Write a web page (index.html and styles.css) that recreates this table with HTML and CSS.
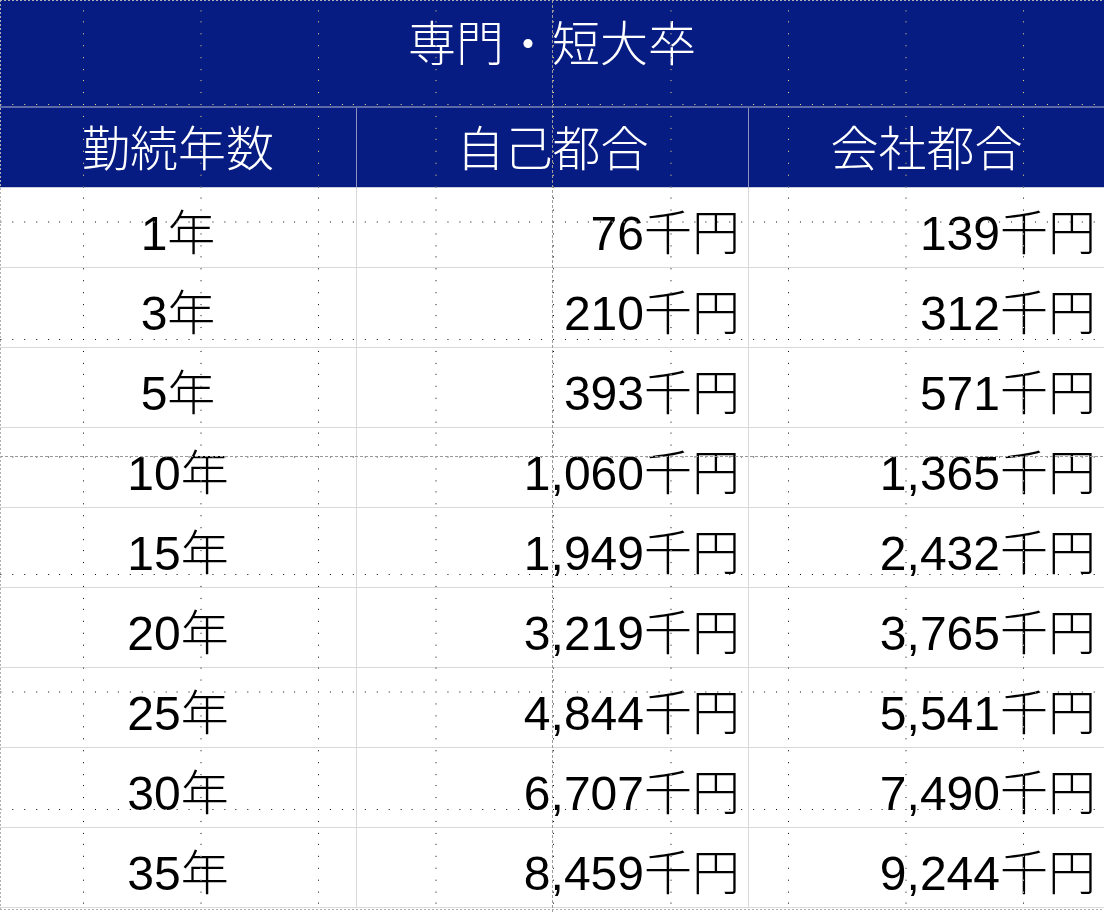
FILE: index.html
```html
<!DOCTYPE html>
<html lang="ja">
<head>
<meta charset="utf-8">
<title>専門・短大卒</title>
<link rel="stylesheet" href="styles.css">
</head>
<body>
<div class="slide">
  <div class="table">
    <div class="title">専門・短大卒</div>
    <div class="hcell">勤続年数</div>
    <div class="hcell">自己都合</div>
    <div class="hcell last">会社都合</div>

    <div class="cell c">1<span class="u">年</span></div><div class="cell r">76<span class="u">千円</span></div><div class="cell r last">139<span class="u">千円</span></div>
    <div class="cell c">3<span class="u">年</span></div><div class="cell r">210<span class="u">千円</span></div><div class="cell r last">312<span class="u">千円</span></div>
    <div class="cell c">5<span class="u">年</span></div><div class="cell r">393<span class="u">千円</span></div><div class="cell r last">571<span class="u">千円</span></div>
    <div class="cell c">10<span class="u">年</span></div><div class="cell r">1,060<span class="u">千円</span></div><div class="cell r last">1,365<span class="u">千円</span></div>
    <div class="cell c">15<span class="u">年</span></div><div class="cell r">1,949<span class="u">千円</span></div><div class="cell r last">2,432<span class="u">千円</span></div>
    <div class="cell c">20<span class="u">年</span></div><div class="cell r">3,219<span class="u">千円</span></div><div class="cell r last">3,765<span class="u">千円</span></div>
    <div class="cell c">25<span class="u">年</span></div><div class="cell r">4,844<span class="u">千円</span></div><div class="cell r last">5,541<span class="u">千円</span></div>
    <div class="cell c">30<span class="u">年</span></div><div class="cell r">6,707<span class="u">千円</span></div><div class="cell r last">7,490<span class="u">千円</span></div>
    <div class="cell c">35<span class="u">年</span></div><div class="cell r">8,459<span class="u">千円</span></div><div class="cell r last">9,244<span class="u">千円</span></div>
  </div>

  <svg class="grid" width="1104" height="912" viewBox="0 0 1104 912" aria-hidden="true">
    <defs>
      <pattern id="dots" x="83" y="104" width="117.5" height="117.5" patternUnits="userSpaceOnUse">
        <path d="M0.5 0V117.5" stroke="#fff" stroke-width="1" stroke-dasharray="1 10.75" shape-rendering="crispEdges"/>
        <path d="M0 0.5H117.5" stroke="#fff" stroke-width="1" stroke-dasharray="1 10.75" shape-rendering="crispEdges"/>
      </pattern>
    </defs>
    <rect width="1104" height="912" fill="url(#dots)"/>
  </svg>

  <svg class="guides" width="1104" height="912" viewBox="0 0 1104 912" aria-hidden="true">
    <path d="M552.5 0V912" stroke="#9a9a9a" stroke-width="1" stroke-dasharray="3 2"/>
    <path d="M0 456.5H1104" stroke="#9a9a9a" stroke-width="1" stroke-dasharray="3 2"/>
    <path d="M0 0.5H1104M0.5 0V910M0 909.5H1104" stroke="#b0b0b0" stroke-width="1" stroke-dasharray="2 2"/>
  </svg>
</div>
</body>
</html>
```
FILE: styles.css
```css
html, body {
  margin: 0;
  padding: 0;
  background: #ffffff;
}

.slide {
  position: relative;
  width: 1104px;
  height: 912px;
  overflow: hidden;
  background: #ffffff;
  font-family: "Liberation Sans", "Noto Sans CJK JP", sans-serif;
}

.table {
  display: grid;
  grid-template-columns: 357px 392px 355px;
  grid-template-rows: 108px;
  grid-auto-rows: 80px;
}

.title {
  grid-column: 1 / 4;
  box-sizing: border-box;
  background: #061c82;
  color: #ffffff;
  font-size: 48px;
  font-weight: 300;
  line-height: 1;
  display: flex;
  align-items: center;
  justify-content: center;
  padding-bottom: 16px;
  border-bottom: 2px solid #5d6aa8;
}

.hcell {
  box-sizing: border-box;
  background: #061c82;
  color: #ffffff;
  font-size: 48px;
  font-weight: 300;
  line-height: 1;
  display: flex;
  align-items: center;
  justify-content: center;
  padding-top: 4px;
  border-right: 1px solid #8c93bd;
  border-bottom: 1px solid #c9ccd8;
}

.cell {
  box-sizing: border-box;
  color: #000000;
  font-size: 48px;
  line-height: 1;
  display: flex;
  align-items: center;
  padding-top: 12px;
  border-right: 1px solid #d9d9d9;
  border-bottom: 1px solid #d9d9d9;
}

.u {
  font-weight: 300;
}

.hcell.last,
.cell.last {
  border-right: none;
}

.c {
  justify-content: center;
}

.r {
  justify-content: flex-end;
  padding-right: 8px;
}

.grid {
  position: absolute;
  top: 0;
  left: 0;
  mix-blend-mode: difference;
  pointer-events: none;
}

.guides {
  position: absolute;
  top: 0;
  left: 0;
  pointer-events: none;
}
```
